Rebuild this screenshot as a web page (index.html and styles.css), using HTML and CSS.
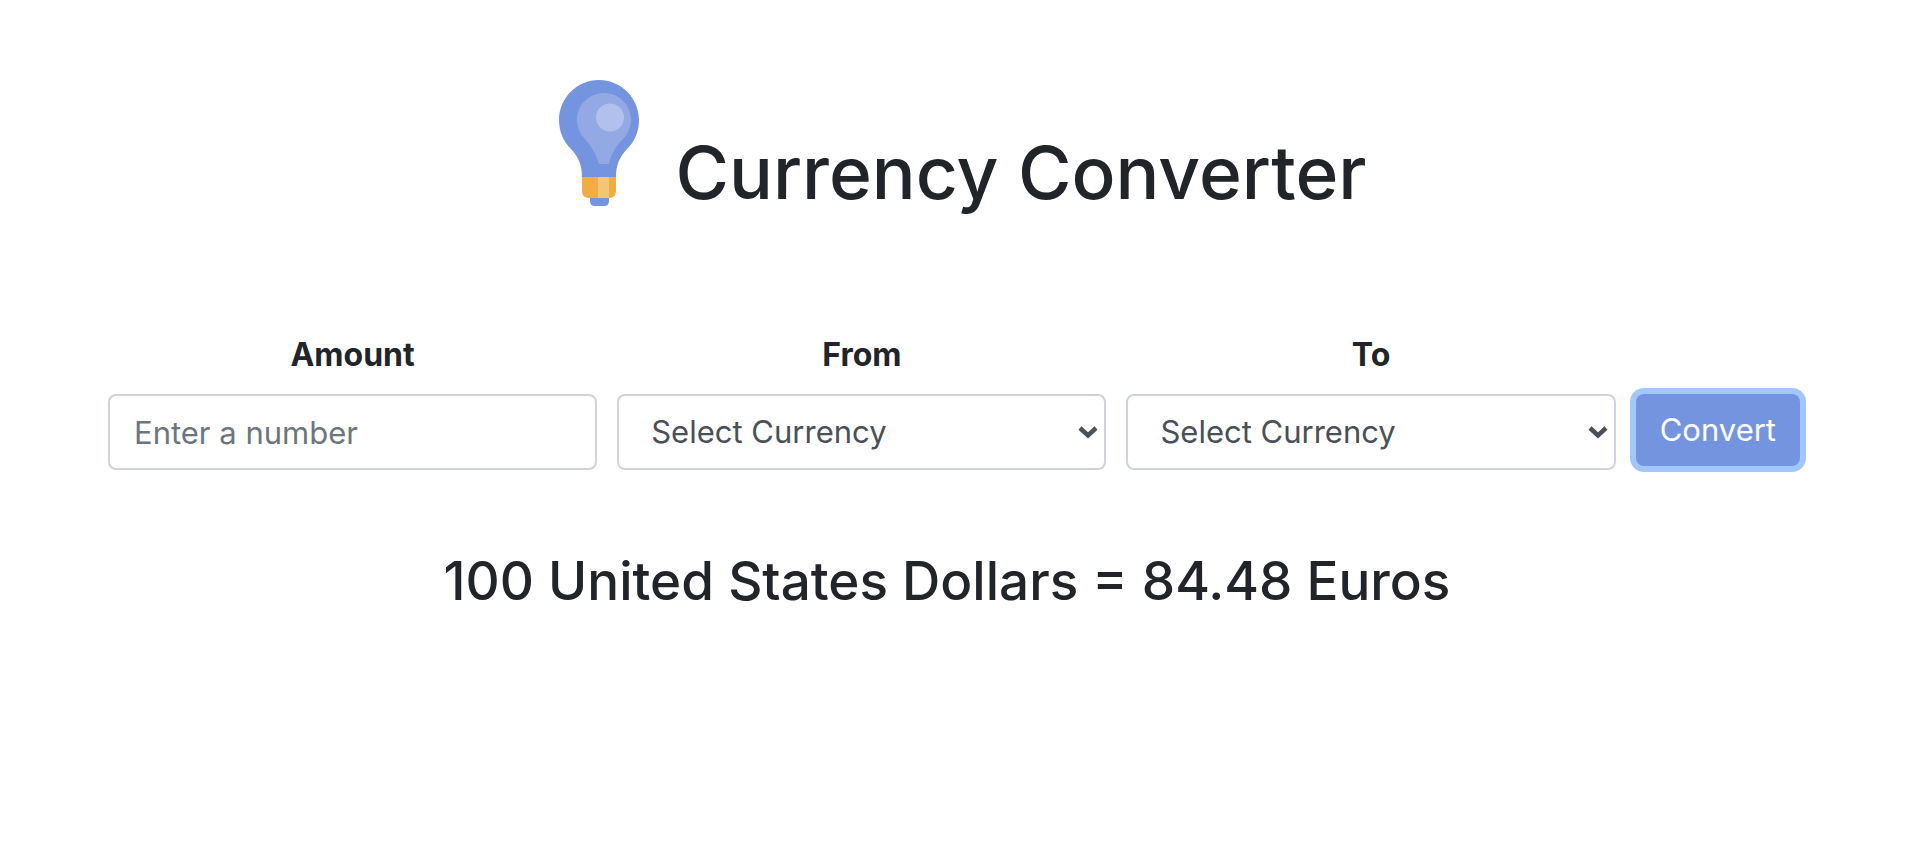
FILE: index.html
```html
<!DOCTYPE html>
<html lang="en">
<head>
<meta charset="utf-8">
<title>Currency Converter</title>
<link rel="stylesheet" href="styles.css">
</head>
<body>
<header class="header">
  <svg class="bulb" viewBox="0 0 80 126" aria-hidden="true">
    <path fill="#7594df" d="M40 0C62 0 80 18 80 40C80 51 76 61 68 69C60 78 57 85 57 98H23C23 85 20 78 12 69C4 61 0 51 0 40C0 18 18 0 40 0Z"/>
    <path fill="#92a9e3" d="M45 13C60 13 72 25 72 40C72 47 69 54 64 59C57 66 52 74 50 84H40C37 74 32 66 26 59C21 54 18 47 18 40C18 25 30 13 45 13Z"/>
    <circle cx="51" cy="37.500" r="14" fill="#b2c1ec"/>
    <path fill="#7594df" d="M31 116H50V121Q50 126 45 126H36Q31 126 31 121Z"/>
    <path fill="#efad43" d="M23 97H57V111Q57 118 50 118H30Q23 118 23 111Z"/>
    <path fill="#f2c672" d="M39 97H50V118H39Z"/>
  </svg>
  <h1 class="title">Currency Converter</h1>
</header>
<main>
  <form class="form">
    <div class="field">
      <label class="label" for="amount">Amount</label>
      <input class="control" id="amount" type="text" placeholder="Enter a number">
    </div>
    <div class="field">
      <label class="label" for="from">From</label>
      <div class="picker">
        <select class="control select" id="from"><option>Select Currency</option></select>
        <svg class="chevron" viewBox="0 0 20 14" aria-hidden="true"><path d="M2 3L10 10.500L18 3"/></svg>
      </div>
    </div>
    <div class="field">
      <label class="label" for="to">To</label>
      <div class="picker">
        <select class="control select" id="to"><option>Select Currency</option></select>
        <svg class="chevron" viewBox="0 0 20 14" aria-hidden="true"><path d="M2 3L10 10.500L18 3"/></svg>
      </div>
    </div>
    <button class="convert" type="button">Convert</button>
  </form>
  <h2 class="result">100 United States Dollars = 84.48 Euros</h2>
</main>
</body>
</html>
```
FILE: styles.css
```css
* { box-sizing: border-box; }
body {
  margin: 0;
  background: #fff;
  color: #212529;
  font-family: Inter, "Liberation Sans", sans-serif;
}
.header {
  display: flex;
  justify-content: center;
  gap: 36px;
  padding-top: 80px;
}
.bulb { width: 80px; height: 126px; }
.title {
  margin: 45px 0 0;
  font-size: 73px;
  line-height: 96px;
  font-weight: 500;
}
.form {
  display: grid;
  grid-template-columns: repeat(3, 1fr) auto;
  gap: 20px;
  margin-top: 110px;
  padding: 0 126px 0 108px;
}
.field { display: flex; flex-direction: column; gap: 15px; }
.label {
  font-size: 32px;
  line-height: 48px;
  font-weight: 700;
  text-align: center;
}
.control {
  width: 100%;
  height: 76px;
  padding: 0 24px;
  border: 2px solid #ced4da;
  border-radius: 8px;
  background: #fff;
  color: #495057;
  font: 400 31px/48px Inter, "Liberation Sans", sans-serif;
}
.control::placeholder { color: #6c757d; opacity: 1; }
.picker { display: grid; align-items: center; }
.picker > * { grid-area: 1 / 1; }
.select { appearance: none; padding: 0 32px; }
.chevron {
  justify-self: end;
  width: 20px;
  height: 14px;
  margin-right: 8px;
  fill: none;
  stroke: #495057;
  stroke-width: 4.500;
  pointer-events: none;
}
.convert {
  height: 72px;
  margin-top: 63px;
  padding: 0 24px;
  border: 0;
  border-radius: 8px;
  background: #7594df;
  box-shadow: 0 0 0 6px #a2c7fb;
  color: #fff;
  font: 400 31px/48px Inter, "Liberation Sans", sans-serif;
}
.result {
  margin: 78px 32px 0 0;
  font-size: 53px;
  line-height: 66px;
  font-weight: 500;
  text-align: center;
}
```
